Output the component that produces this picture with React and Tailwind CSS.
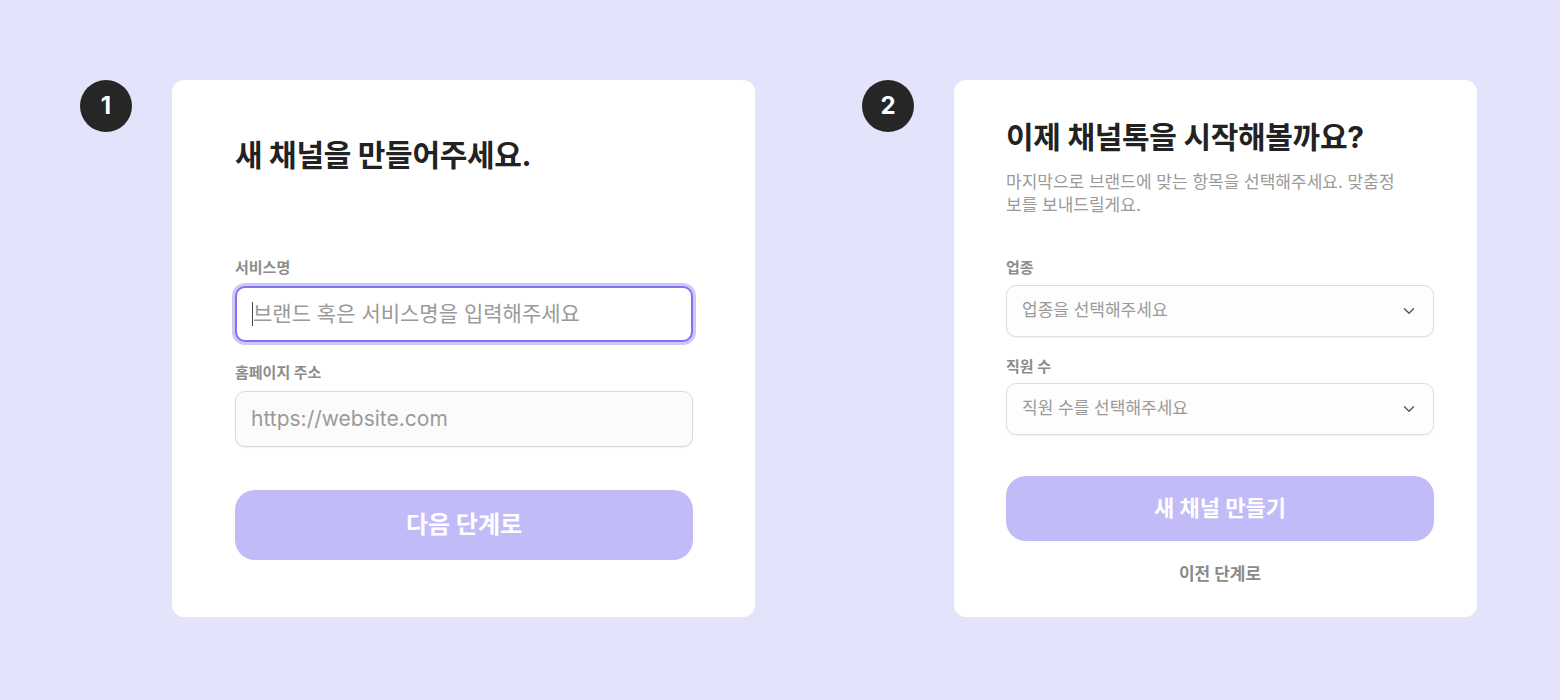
import React from 'react';
import { ChevronDown } from 'lucide-react';

const font = { fontFamily: 'Inter, "Noto Sans CJK KR", sans-serif' };

function Badge({ n }) {
    return (
        <div className="w-[52px] h-[52px] shrink-0 rounded-full bg-[#262626] text-white flex items-center justify-center text-[24px] font-bold">
            {n}
        </div>
    );
}

function Label({ children }) {
    return <div className="text-[15px] leading-[18px] font-bold text-[#8c8c8c]">{children}</div>;
}

function Select({ placeholder, className }) {
    return (
        <div className={`h-[52px] rounded-[10px] border border-[#dedede] bg-[#fdfdfd] shadow-[0_1px_2px_rgba(0,0,0,0.06)] flex items-center justify-between pl-[15px] pr-[15px] ${className}`}>
            <span className="text-[17px] text-[#9a9a9a]">{placeholder}</span>
            <ChevronDown size={18} strokeWidth={1.8} className="text-[#555]" />
        </div>
    );
}

export default function App() {
    return (
        <div className="w-full h-[700px] bg-[#e3e3fb] flex items-start pl-[80px] pt-[80px]" style={font}>
            {/* Step 1 */}
            <div className="flex items-start gap-10">
                <Badge n="1" />
                <div className="w-[583px] h-[537px] bg-white rounded-[12px] pl-[63px] pr-[62px] pt-[56px] flex flex-col">
                    <h1 className="text-[30px] leading-[38px] font-bold text-[#222] tracking-[-0.3px]">새 채널을 만들어주세요.</h1>

                    <div className="mt-[85px]">
                        <Label>서비스명</Label>
                    </div>
                    <div className="mt-[9px] h-[56px] rounded-[10px] border-2 border-[#7d74ef] ring-[3px] ring-[#cdc8f8] bg-white flex items-center pl-[15px]">
                        <span className="w-px h-[24px] bg-[#444]" />
                        <span className="text-[21px] text-[#9a9a9a]">브랜드 혹은 서비스명을 입력해주세요</span>
                    </div>

                    <div className="mt-[22px]">
                        <Label>홈페이지 주소</Label>
                    </div>
                    <div className="mt-[9px] h-[56px] rounded-[10px] border border-[#d9d9d9] bg-[#fbfbfb] shadow-[0_1px_2px_rgba(0,0,0,0.06)] flex items-center pl-[15px]">
                        <span className="text-[21px] text-[#9a9a9a]">https://website.com</span>
                    </div>

                    <button className="mt-[43px] h-[70px] w-full rounded-[20px] bg-[#c1bcf8] text-white text-[24px] font-bold">
                        다음 단계로
                    </button>
                </div>
            </div>

            {/* Step 2 */}
            <div className="flex items-start gap-10 ml-[107px]">
                <Badge n="2" />
                <div className="w-[523px] h-[537px] bg-white rounded-[12px] pl-[52px] pr-[43px] pt-[38px] flex flex-col">
                    <h1 className="text-[30px] leading-[38px] font-bold text-[#222] tracking-[-0.3px] whitespace-nowrap">이제 채널톡을 시작해볼까요?</h1>
                    <p className="mt-[15px] text-[17px] leading-[23px] text-[#9a9a9a] whitespace-nowrap">
                        마지막으로 브랜드에 맞는 항목을 선택해주세요. 맞춤정<br />보를 보내드릴게요.
                    </p>

                    <div className="mt-[42px]">
                        <Label>업종</Label>
                    </div>
                    <Select placeholder="업종을 선택해주세요" className="mt-[8px]" />

                    <div className="mt-[21px]">
                        <Label>직원 수</Label>
                    </div>
                    <Select placeholder="직원 수를 선택해주세요" className="mt-[7px]" />

                    <button className="mt-[41px] h-[65px] w-full rounded-[20px] bg-[#c1bcf8] text-white text-[22px] font-bold">
                        새 채널 만들기
                    </button>
                    <div className="mt-[21px] leading-[24px] text-center text-[17px] font-bold text-[#8a8a8a]">이전 단계로</div>
                </div>
            </div>
        </div>
    );
}
